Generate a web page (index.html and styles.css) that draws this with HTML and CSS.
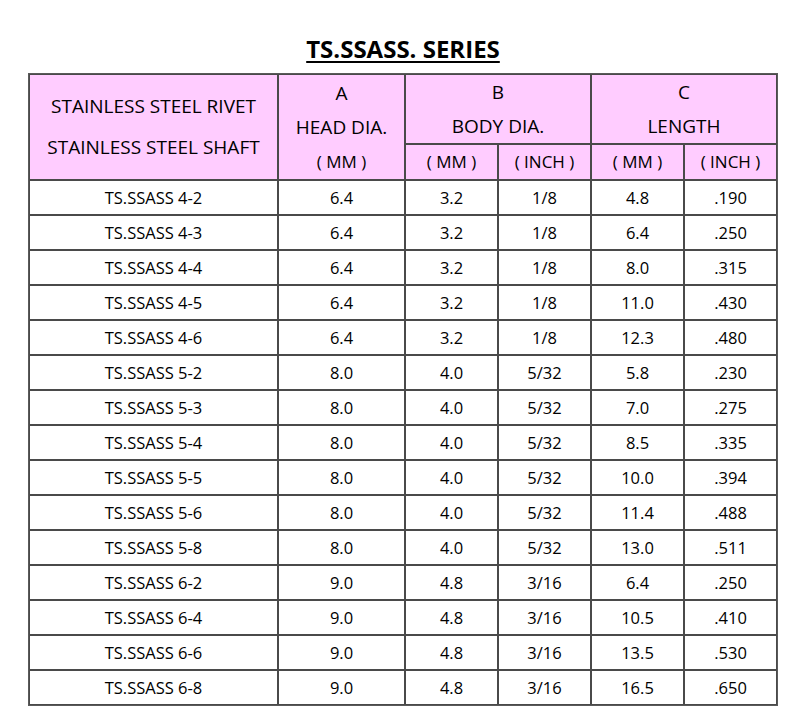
FILE: index.html
```html
<!DOCTYPE html>
<html>
<head>
<meta charset="utf-8">
<link rel="stylesheet" href="styles.css">
</head>
<body>
<h1 class="title">TS.SSASS. SERIES</h1>
<table class="spec">
  <thead>
    <tr class="hrow1">
      <th class="c0" rowspan="2"><div class="l41">STAINLESS STEEL RIVET</div><div class="l41">STAINLESS STEEL SHAFT</div></th>
      <th class="c1" rowspan="2">A<br>HEAD DIA.<br><span class="unit">( MM )</span></th>
      <th colspan="2">B<br>BODY DIA.</th>
      <th colspan="2">C<br>LENGTH</th>
    </tr>
    <tr class="hrow2">
      <th class="c2 unit">( MM )</th>
      <th class="c3 unit">( INCH )</th>
      <th class="c4 unit">( MM )</th>
      <th class="c5 unit">( INCH )</th>
    </tr>
  </thead>
  <tbody>
    <tr><td>TS.SSASS 4-2</td><td>6.4</td><td>3.2</td><td>1/8</td><td>4.8</td><td>.190</td></tr>
    <tr><td>TS.SSASS 4-3</td><td>6.4</td><td>3.2</td><td>1/8</td><td>6.4</td><td>.250</td></tr>
    <tr><td>TS.SSASS 4-4</td><td>6.4</td><td>3.2</td><td>1/8</td><td>8.0</td><td>.315</td></tr>
    <tr><td>TS.SSASS 4-5</td><td>6.4</td><td>3.2</td><td>1/8</td><td>11.0</td><td>.430</td></tr>
    <tr><td>TS.SSASS 4-6</td><td>6.4</td><td>3.2</td><td>1/8</td><td>12.3</td><td>.480</td></tr>
    <tr><td>TS.SSASS 5-2</td><td>8.0</td><td>4.0</td><td>5/32</td><td>5.8</td><td>.230</td></tr>
    <tr><td>TS.SSASS 5-3</td><td>8.0</td><td>4.0</td><td>5/32</td><td>7.0</td><td>.275</td></tr>
    <tr><td>TS.SSASS 5-4</td><td>8.0</td><td>4.0</td><td>5/32</td><td>8.5</td><td>.335</td></tr>
    <tr><td>TS.SSASS 5-5</td><td>8.0</td><td>4.0</td><td>5/32</td><td>10.0</td><td>.394</td></tr>
    <tr><td>TS.SSASS 5-6</td><td>8.0</td><td>4.0</td><td>5/32</td><td>11.4</td><td>.488</td></tr>
    <tr><td>TS.SSASS 5-8</td><td>8.0</td><td>4.0</td><td>5/32</td><td>13.0</td><td>.511</td></tr>
    <tr><td>TS.SSASS 6-2</td><td>9.0</td><td>4.8</td><td>3/16</td><td>6.4</td><td>.250</td></tr>
    <tr><td>TS.SSASS 6-4</td><td>9.0</td><td>4.8</td><td>3/16</td><td>10.5</td><td>.410</td></tr>
    <tr><td>TS.SSASS 6-6</td><td>9.0</td><td>4.8</td><td>3/16</td><td>13.5</td><td>.530</td></tr>
    <tr><td>TS.SSASS 6-8</td><td>9.0</td><td>4.8</td><td>3/16</td><td>16.5</td><td>.650</td></tr>
  </tbody>
</table>
</body>
</html>
```
FILE: styles.css
```css
html, body {
  margin: 0;
  padding: 0;
  background: #ffffff;
}
body {
  font-family: "Open Sans", "Noto Sans", "DejaVu Sans", sans-serif;
  color: #000000;
  padding-top: 34px;
}
.title {
  margin: 0 0 10px 28px;
  width: 750px;
  text-align: center;
  font-size: 24px;
  line-height: 29px;
  font-weight: 700;
  text-decoration: underline;
  text-decoration-thickness: 2px;
  text-underline-offset: 3px;
  color: #000;
}
.spec {
  margin-left: 28px;
  width: 750px;
  border-collapse: separate;
  border-spacing: 0;
  border: 1px solid #5a5a5a;
  table-layout: fixed;
}
.spec th, .spec td {
  border: 1px solid #4a4a4a;
  padding: 0;
  text-align: center;
  font-size: 16.5px;
  color: #000;
}
.spec th {
  background: #ffccff;
  font-weight: 500;
  line-height: 34px;
  color: #000;
  font-size: 19px;
}
.spec th.unit, .spec .unit {
  font-size: 17px;
  font-weight: 400;
}
.hrow1 { height: 70px; }
.hrow2 { height: 35px; }
.spec tbody tr { height: 35px; }
.spec td { line-height: 32px; }
.c0 { width: 247px; }
.c1 { width: 125px; }
.c2 { width: 91px; }
.c3 { width: 91px; }
.c4 { width: 92px; }
.c5 { width: 91px; }
.l41 { line-height: 41px; font-size: 19px; }
```
